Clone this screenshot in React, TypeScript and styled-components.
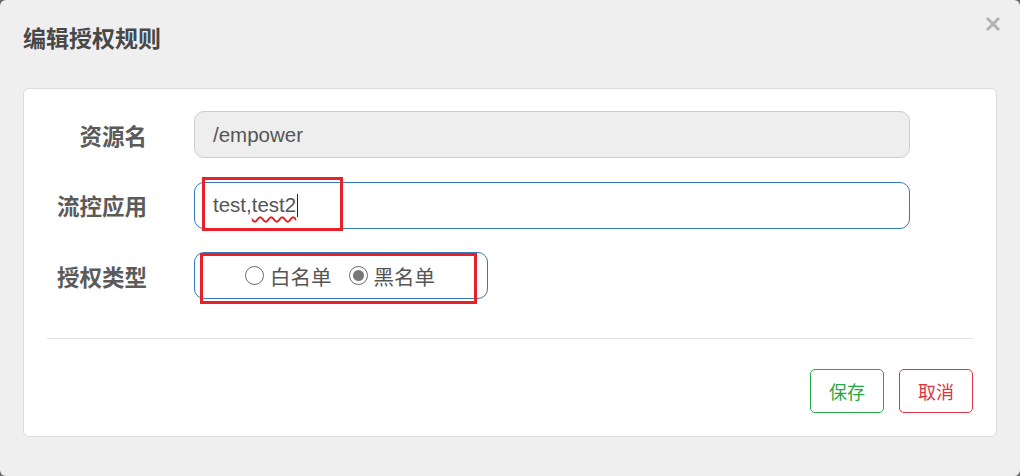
import React from "react";
import styled, { createGlobalStyle } from "styled-components";

const Global = createGlobalStyle`
  html, body { margin: 0; padding: 0; background: #6b6b6b; }
  body { font-family: "Liberation Sans", "Noto Sans CJK SC", sans-serif; }
  * { box-sizing: border-box; }
`;

const Dialog = styled.div`
  width: 1020px;
  height: 476px;
  background: #efefef;
  border-radius: 6px;
  display: flex;
  flex-direction: column;
  position: relative;
`;

const Header = styled.div`
  height: 88px;
  padding: 0 23px;
  display: flex;
  align-items: center;
  justify-content: space-between;
`;

const Title = styled.h4`
  margin: 0;
  margin-top: -14px;
  font-family: "Noto Sans CJK SC", sans-serif;
  font-size: 23px;
  font-weight: 700;
  color: #484848;
`;

const Close = styled.button`
  position: absolute;
  top: 16px;
  right: 19px;
  width: 16px;
  height: 16px;
  padding: 0;
  border: none;
  background: transparent;
  display: flex;
`;

const Panel = styled.div`
  margin: 0 23px;
  height: 349px;
  background: #fff;
  border: 1px solid #dcdcdc;
  border-radius: 6px;
  padding: 22px 0 23px;
  display: flex;
  flex-direction: column;
`;

const Form = styled.div`
  display: flex;
  flex-direction: column;
  gap: 23.5px;
  padding-right: 86px;
`;

const Row = styled.div`
  display: grid;
  grid-template-columns: 123px 1fr;
  column-gap: 47px;
  align-items: center;
  position: relative;
`;

const Label = styled.label`
  text-align: right;
  font-family: "Noto Sans CJK SC", sans-serif;
  font-size: 22.5px;
  font-weight: 700;
  color: #5b5b5b;
`;

const Field = styled.div<{ $disabled?: boolean }>`
  height: 47px;
  border-radius: 10px;
  border: 1px solid ${(p) => (p.$disabled ? "#cccccc" : "#3479bd")};
  background: ${(p) => (p.$disabled ? "#eeeeee" : "#ffffff")};
  padding: 0 18px;
  display: flex;
  align-items: center;
  font-family: "Liberation Sans", "Noto Sans CJK SC", sans-serif;
  font-size: 20.5px;
  color: #555;
`;

const Wavy = styled.span`
  text-decoration: underline wavy #e02020;
  text-decoration-thickness: 1.5px;
  text-underline-offset: 4px;
`;

const Caret = styled.span`
  display: inline-block;
  width: 1px;
  height: 23px;
  background: #222;
  margin-left: 1px;
`;

const RadioGroup = styled.div`
  height: 47px;
  width: 294px;
  border-radius: 10px;
  border: 1px solid #3479bd;
  display: flex;
  align-items: center;
  justify-content: center;
  gap: 17px;
  padding-right: 2px;
`;

const RadioItem = styled.label`
  display: flex;
  align-items: center;
  gap: 6px;
  font-family: "Noto Sans CJK SC", sans-serif;
  font-size: 20.5px;
  color: #555;
`;

const Dot = styled.span<{ $checked?: boolean }>`
  width: 19px;
  height: 19px;
  border-radius: 50%;
  border: 1.5px solid #6a6a6a;
  background: #fff;
  display: flex;
  align-items: center;
  justify-content: center;
  &::after {
    content: "";
    width: 11px;
    height: 11px;
    border-radius: 50%;
    background: ${(p) => (p.$checked ? "#777" : "transparent")};
  }
`;

const Mark = styled.div<{ $left: number; $top: number; $w: number; $h: number }>`
  position: absolute;
  left: ${(p) => p.$left}px;
  top: ${(p) => p.$top}px;
  width: ${(p) => p.$w}px;
  height: ${(p) => p.$h}px;
  border: 3px solid #e8202a;
  pointer-events: none;
`;

const Divider = styled.hr`
  margin: 39px 23px 0;
  border: none;
  border-top: 1px solid #e2e2e2;
`;

const Footer = styled.div`
  display: flex;
  justify-content: flex-end;
  gap: 15px;
  padding: 30px 23px 0;
`;

const Button = styled.button<{ $color: string }>`
  width: 74px;
  height: 44px;
  border-radius: 5px;
  border: 1px solid ${(p) => p.$color};
  background: #fff;
  color: ${(p) => p.$color};
  font-family: "Noto Sans CJK SC", sans-serif;
  font-size: 18px;
  padding: 0;
`;

export default function App() {
  return (
    <>
      <Global />
      <Dialog>
        <Header>
          <Title>编辑授权规则</Title>
          <Close aria-label="close">
            <svg width="16" height="16" viewBox="0 0 16 16">
              <path d="M2 2 L14 14 M14 2 L2 14" stroke="#b3b3b3" strokeWidth="3" strokeLinecap="butt" />
            </svg>
          </Close>
        </Header>
        <Panel>
          <Form>
            <Row>
              <Label>资源名</Label>
              <Field $disabled>/empower</Field>
            </Row>
            <Row>
              <Label>流控应用</Label>
              <Field>
                test,<Wavy>test2</Wavy>
                <Caret />
              </Field>
              <Mark $left={178} $top={-5} $w={141} $h={54} />
            </Row>
            <Row>
              <Label>授权类型</Label>
              <RadioGroup>
                <RadioItem>
                  <Dot />
                  白名单
                </RadioItem>
                <RadioItem>
                  <Dot $checked />
                  黑名单
                </RadioItem>
              </RadioGroup>
              <Mark $left={176} $top={1} $w={277} $h={51} />
            </Row>
          </Form>
          <Divider />
          <Footer>
            <Button $color="#28a745">保存</Button>
            <Button $color="#dc3545">取消</Button>
          </Footer>
        </Panel>
      </Dialog>
    </>
  );
}
